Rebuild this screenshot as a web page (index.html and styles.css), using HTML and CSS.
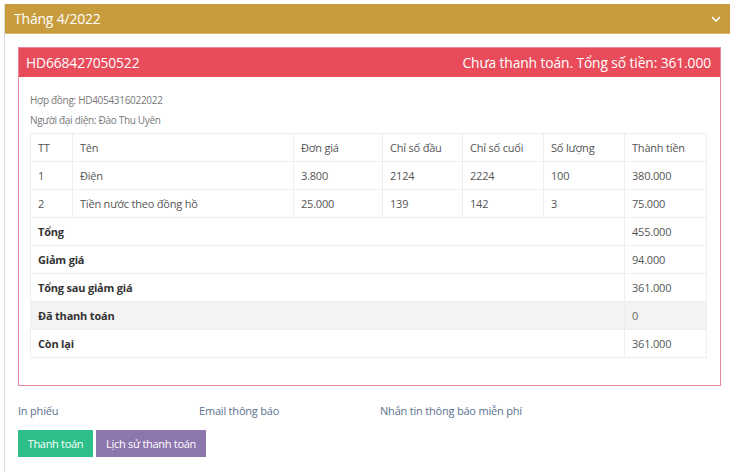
FILE: index.html
```html
<!DOCTYPE html>
<html lang="vi">
<head>
<meta charset="utf-8">
<link rel="stylesheet" href="styles.css">
</head>
<body>
<div class="panel">
  <div class="panel-head">
    <span class="month">Tháng 4/2022</span>
    <svg class="chev" width="10" height="8" viewBox="0 0 10 8"><path d="M1 2 L5 6 L9 2" fill="none" stroke="#fff" stroke-width="1.6"/></svg>
  </div>
  <div class="panel-body">
    <div class="invoice">
      <div class="inv-head">
        <span>HD668427050522</span>
        <span>Chưa thanh toán. Tổng số tiền: 361.000</span>
      </div>
      <div class="inv-body">
        <div class="meta">Hợp đồng: HD4054316022022</div>
        <div class="meta">Người đại diện: Đào Thu Uyên</div>
        <table class="items">
          <colgroup>
            <col style="width:42px"><col style="width:221px"><col style="width:89px"><col style="width:80px"><col style="width:81px"><col style="width:81px"><col style="width:82px">
          </colgroup>
          <tr><td>TT</td><td>Tên</td><td>Đơn giá</td><td>Chỉ số đầu</td><td>Chỉ số cuối</td><td>Số lượng</td><td>Thành tiền</td></tr>
          <tr><td>1</td><td>Điện</td><td>3.800</td><td>2124</td><td>2224</td><td>100</td><td>380.000</td></tr>
          <tr><td>2</td><td>Tiền nước theo đồng hồ</td><td>25.000</td><td>139</td><td>142</td><td>3</td><td>75.000</td></tr>
          <tr class="sum"><th colspan="6">Tổng</th><td>455.000</td></tr>
          <tr class="sum"><th colspan="6">Giảm giá</th><td>94.000</td></tr>
          <tr class="sum"><th colspan="6">Tổng sau giảm giá</th><td>361.000</td></tr>
          <tr class="sum grey"><th colspan="6">Đã thanh toán</th><td>0</td></tr>
          <tr class="sum"><th colspan="6">Còn lại</th><td>361.000</td></tr>
        </table>
      </div>
    </div>
    <div class="links">
      <a>In phiếu</a>
      <a>Email thông báo</a>
      <a>Nhắn tin thông báo miễn phí</a>
    </div>
    <div class="buttons">
      <button class="btn green">Thanh toán</button>
      <button class="btn purple">Lịch sử thanh toán</button>
    </div>
  </div>
</div>
</body>
</html>
```
FILE: styles.css
```css
* { box-sizing: border-box; }
html, body { margin: 0; padding: 0; background: #fff; }
body {
  font-family: "Open Sans", "Liberation Sans", sans-serif;
  font-size: 11px;
  color: #333;
  padding-top: 4px;
}
.panel {
  margin-left: 4px;
  border-left: 1px solid #ddd;
  height: 468px;
}
.panel-head {
  background: #c89b3c;
  height: 30px;
  display: flex;
  align-items: center;
  justify-content: space-between;
  padding: 0 9px 0 9px;
  color: #fff;
  font-size: 14px;
  border-bottom: 1px solid #d8b870;
}
.month { letter-spacing: -0.2px; }
.panel-body {
  padding: 13px 9px 0 13px;
}
.invoice {
  border: 1px solid #e9899a;
  height: 339px;
}
.inv-head {
  background: #e84c5a;
  color: #fff;
  height: 29px;
  display: flex;
  align-items: center;
  justify-content: space-between;
  padding: 0 9px 0 7px;
  font-size: 13.8px;
  letter-spacing: -0.1px;
}
.inv-body {
  padding: 13px 13px 0 11px;
}
.meta {
  font-size: 10px;
  color: #777;
  line-height: 20px;
  letter-spacing: -0.3px;
}
.items {
  border-collapse: collapse;
  margin-top: 3px;
  width: 676px;
  table-layout: fixed;
}
.items td, .items th {
  border: 1px solid #eee;
  height: 28px;
  padding: 0 7px;
  text-align: left;
  font-weight: normal;
  font-size: 11px;
  color: #555;
  letter-spacing: -0.2px;
  white-space: nowrap;
}
.items tr.sum th { font-weight: bold; color: #333; }
.items tr.grey th, .items tr.grey td { background: #f3f3f3; }
.items tr.grey td { color: #666; }
.links {
  display: grid;
  grid-template-columns: 181px 181px 181px;
  margin-top: 18px;
  line-height: 14px;
}
.links a {
  color: #5b7390;
  font-size: 11px;
  letter-spacing: -0.2px;
}
.buttons {
  display: flex;
  gap: 3px;
  margin-top: 12px;
}
.btn {
  border: none;
  color: #fff;
  font-family: inherit;
  font-size: 11px;
  height: 27px;
  padding: 0 9px;
  letter-spacing: -0.3px;
}
.green { background: #2dbf89; width: 75px; }
.purple { background: #8d76ad; width: 110px; }
```
